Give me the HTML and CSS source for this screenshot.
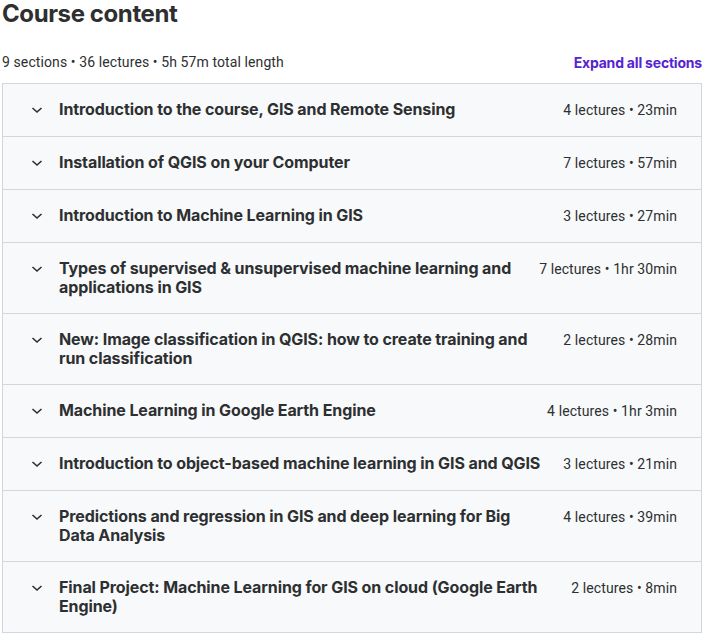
FILE: index.html
```html
<!DOCTYPE html>
<html lang="en">
<head>
  <meta charset="UTF-8" />
  <title>Course content</title>
  <link rel="stylesheet" href="styles.css">
</head>
<body>
  <div class="curriculum">
    <h2 class="heading">Course content</h2>

    <div class="summary">
      <span>9 sections • 36 lectures • 5h 57m total length</span>
      <button class="expand">Expand all sections</button>
    </div>

    <div class="sections">
      <div class="section">
        <svg class="chevron" viewBox="0 0 20 20"><path d="M5.5 8 L10 12 L14.5 8" /></svg>
        <div class="section-title">Introduction to the course, GIS and Remote Sensing</div>
        <div class="section-meta">4 lectures • 23min</div>
      </div>
      <div class="section">
        <svg class="chevron" viewBox="0 0 20 20"><path d="M5.5 8 L10 12 L14.5 8" /></svg>
        <div class="section-title">Installation of QGIS on your Computer</div>
        <div class="section-meta">7 lectures • 57min</div>
      </div>
      <div class="section">
        <svg class="chevron" viewBox="0 0 20 20"><path d="M5.5 8 L10 12 L14.5 8" /></svg>
        <div class="section-title">Introduction to Machine Learning in GIS</div>
        <div class="section-meta">3 lectures • 27min</div>
      </div>
      <div class="section">
        <svg class="chevron" viewBox="0 0 20 20"><path d="M5.5 8 L10 12 L14.5 8" /></svg>
        <div class="section-title">Types of supervised &amp; unsupervised machine learning and applications in GIS</div>
        <div class="section-meta">7 lectures • 1hr 30min</div>
      </div>
      <div class="section">
        <svg class="chevron" viewBox="0 0 20 20"><path d="M5.5 8 L10 12 L14.5 8" /></svg>
        <div class="section-title">New: Image classification in QGIS: how to create training and run classification</div>
        <div class="section-meta">2 lectures • 28min</div>
      </div>
      <div class="section">
        <svg class="chevron" viewBox="0 0 20 20"><path d="M5.5 8 L10 12 L14.5 8" /></svg>
        <div class="section-title">Machine Learning in Google Earth Engine</div>
        <div class="section-meta">4 lectures • 1hr 3min</div>
      </div>
      <div class="section">
        <svg class="chevron" viewBox="0 0 20 20"><path d="M5.5 8 L10 12 L14.5 8" /></svg>
        <div class="section-title">Introduction to object-based machine learning in GIS and QGIS</div>
        <div class="section-meta">3 lectures • 21min</div>
      </div>
      <div class="section">
        <svg class="chevron" viewBox="0 0 20 20"><path d="M5.5 8 L10 12 L14.5 8" /></svg>
        <div class="section-title">Predictions and regression in GIS and deep learning for Big Data Analysis</div>
        <div class="section-meta">4 lectures • 39min</div>
      </div>
      <div class="section">
        <svg class="chevron" viewBox="0 0 20 20"><path d="M5.5 8 L10 12 L14.5 8" /></svg>
        <div class="section-title">Final Project: Machine Learning for GIS on cloud (Google Earth Engine)</div>
        <div class="section-meta">2 lectures • 8min</div>
      </div>
    </div>
  </div>
</body>
</html>
```

FILE: styles.css
```css
* {
  box-sizing: border-box;
  margin: 0;
  padding: 0;
}

body {
  font-family: Roboto, "Liberation Sans", sans-serif;
  letter-spacing: 0.1px;
  color: #2d2f31;
  background: #fff;
}

.curriculum {
  padding: 0 2px;
}

.heading {
  font-family: Inter, "Liberation Sans", sans-serif;
  font-size: 24px;
  font-weight: 700;
  line-height: 27px;
  letter-spacing: -0.4px;
}

.summary {
  display: flex;
  justify-content: space-between;
  align-items: center;
  font-size: 14px;
  height: 20px;
  margin-top: 25px;
  margin-bottom: 11px;
}

.expand {
  background: none;
  border: none;
  font-family: Inter, "Liberation Sans", sans-serif;
  font-size: 14px;
  font-weight: 700;
  letter-spacing: -0.2px;
  color: #5624d0;
  cursor: pointer;
}

.sections {
  border: 1px solid #d1d7dc;
}

.section {
  display: flex;
  align-items: flex-start;
  gap: 12px;
  padding: 16px 24px;
  background: #f7f9fa;
  border-bottom: 1px solid #d1d7dc;
}

.section:last-child {
  border-bottom: none;
}

.chevron {
  width: 20px;
  height: 20px;
  flex-shrink: 0;
  fill: none;
  stroke: #2d2f31;
  stroke-width: 1.6;
}

.section-title {
  flex: 1;
  font-family: Inter, "Liberation Sans", sans-serif;
  font-size: 16px;
  font-weight: 700;
  line-height: 19px;
  letter-spacing: -0.1px;
  margin-right: 4px;
}

.section-meta {
  font-size: 14px;
  line-height: 20px;
  white-space: nowrap;
}
```
